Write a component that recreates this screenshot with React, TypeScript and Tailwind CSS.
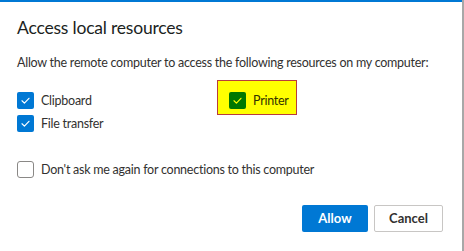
function Check({ checked, box = "bg-[#0078d4]", tick = "#ffffff" }: { checked: boolean; box?: string; tick?: string }) {
  if (!checked) {
    return <span className="block w-[17px] h-[17px] rounded-[3px] border border-[#8a8886] bg-white shrink-0" />;
  }
  return (
    <span className={`flex items-center justify-center w-[17px] h-[17px] rounded-[2px] shrink-0 ${box}`}>
      <svg width="11" height="11" viewBox="0 0 12 12" fill="none">
        <path d="M2.2 6.3 L4.8 8.8 L9.8 3.6" stroke={tick} strokeWidth="1.3" strokeLinecap="round" strokeLinejoin="round" />
      </svg>
    </span>
  );
}

export default function App() {
  return (
    <div className="flex w-[464px] h-[251px] bg-white text-[#323130] tracking-[-0.25px]" style={{ fontFamily: 'Lato, "Noto Sans", sans-serif' }}>
      <div className="flex-1 min-w-0 flex flex-col border-t-2 border-[#0078d4] pl-[17px] pr-[19px]">
        <h1 className="mt-[14px] text-[17.5px] leading-[24px] tracking-[-0.2px] text-[#201f1e]">Access local resources</h1>
        <p className="mt-[14px] text-[12.5px] leading-[18px] whitespace-nowrap">
          Allow the remote computer to access the following resources on my computer:
        </p>

        <div className="mt-[20px] grid grid-cols-[212px_1fr] gap-y-[6px] text-[12.5px] leading-[17px]">
          <label className="flex items-center gap-[7px]">
            <Check checked />
            <span>Clipboard</span>
          </label>
          <div className="flex items-start">
            <div className="-mt-[12px] -ml-[12px] mb-[-6px] flex items-center gap-[7px] pl-[11px] pr-[7px] pt-[11px] pb-[5px] h-[35px] bg-[#ffff00] border border-[#b83c3c]">
              <Check checked box="bg-[#007800]" tick="#ffff00" />
              <span className="text-[#323100]">Printer</span>
            </div>
          </div>
          <label className="flex items-center gap-[7px]">
            <Check checked />
            <span>File transfer</span>
          </label>
        </div>

        <label className="mt-[29px] flex items-center gap-[7px] text-[12.5px] leading-[17px]">
          <Check checked={false} />
          <span>Don&apos;t ask me again for connections to this computer</span>
        </label>

        <div className="mt-[27px] flex justify-end gap-[6px]">
          <button className="w-[66px] h-[27px] rounded-[2px] bg-[#0078d4] text-white text-[13px] font-bold tracking-normal">
            Allow
          </button>
          <button className="w-[69px] h-[27px] rounded-[2px] border border-[#c8c6c4] bg-white text-[#323130] text-[13px] font-bold tracking-normal">
            Cancel
          </button>
        </div>
      </div>
      <div className="w-[2px] bg-[#a8a8a8]" />
    </div>
  );
}
